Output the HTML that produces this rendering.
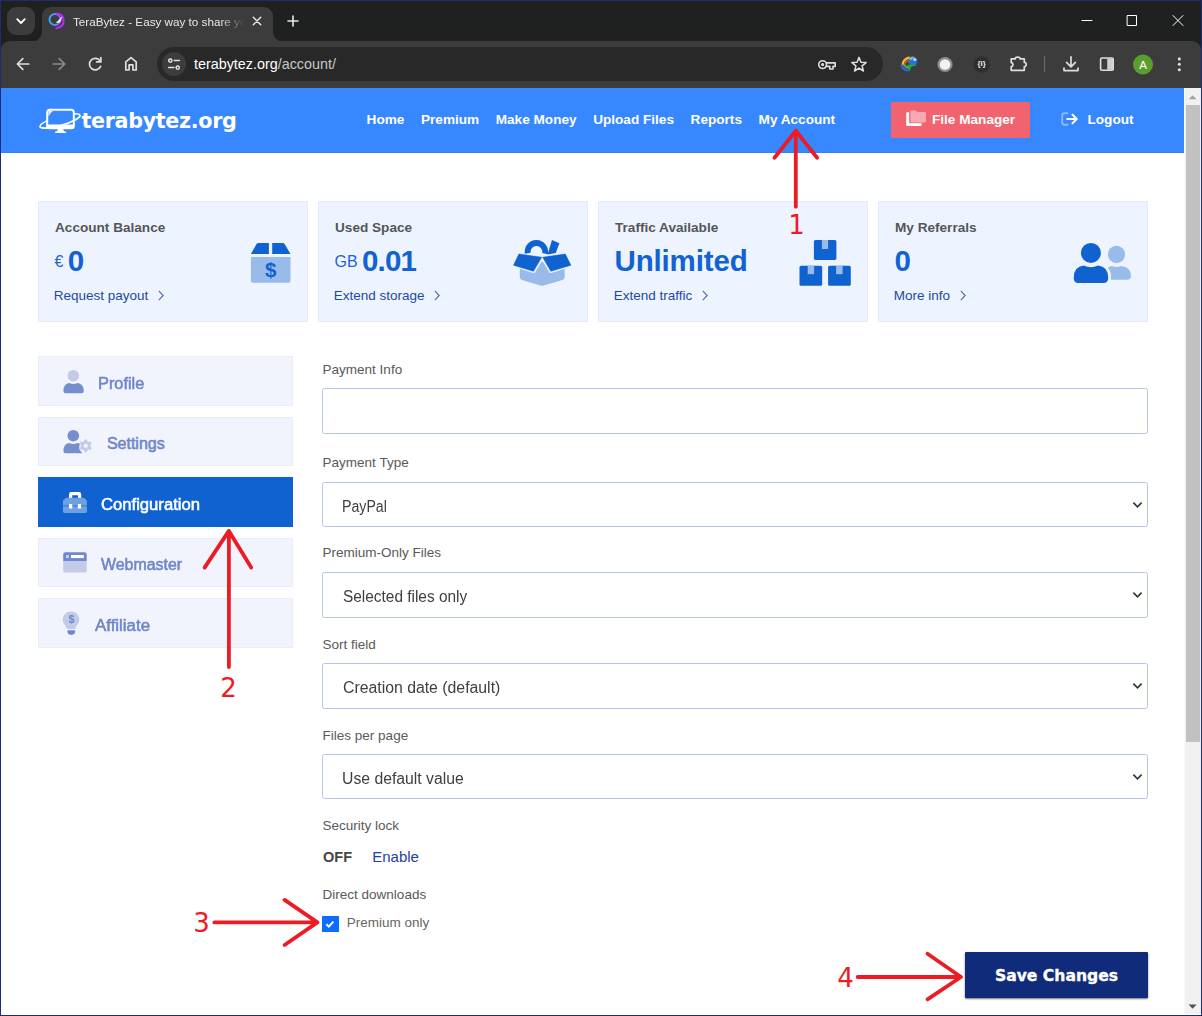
<!DOCTYPE html>
<html lang="en">
<head>
<meta charset="utf-8">
<title>TeraBytez - Easy way to share your files</title>
<style>
*{box-sizing:border-box;margin:0;padding:0}
html,body{width:1202px;height:1016px;overflow:hidden;background:#fff}
body{font-family:"Liberation Sans",sans-serif;position:relative;color:#555}
.abs{position:absolute}
#win{position:absolute;left:0;top:0;width:1202px;height:1016px;overflow:hidden;background:#fff}
#frame{position:absolute;left:0;top:0;width:1202px;height:1016px;border:1px solid #202c70;pointer-events:none;z-index:50}
/* ---------- browser chrome ---------- */
#tabstrip{position:absolute;left:0;top:0;width:1202px;height:60px;background:#1f2020}
#toolbar{position:absolute;left:1px;top:41px;width:1200px;height:47px;background:#3c3c3c;border-radius:9px 9px 0 0}
#tabsearch{position:absolute;left:7px;top:7px;width:28px;height:28px;border-radius:9px;background:#3c3c3c}
#tab{position:absolute;left:42px;top:7px;width:231px;height:35px;background:#3c3c3c;border-radius:9px 9px 0 0}
#tab:before,#tab:after{content:"";position:absolute;bottom:0;width:10px;height:10px;background:radial-gradient(circle at 0 0,transparent 9.5px,#3c3c3c 10px)}
#tab:before{left:-10px}
#tab:after{right:-10px;background:radial-gradient(circle at 100% 0,transparent 9.5px,#3c3c3c 10px)}
#tabtitle{position:absolute;left:31px;top:7px;width:170px;height:16px;font-size:11.7px;line-height:16px;color:#e8e8e8;white-space:nowrap;overflow:hidden;-webkit-mask-image:linear-gradient(90deg,#000 146px,transparent 172px);mask-image:linear-gradient(90deg,#000 146px,transparent 172px)}
#omni{position:absolute;left:157px;top:47px;width:726px;height:34px;border-radius:17px;background:#282828}
#siteinfo{position:absolute;left:5px;top:5px;width:24px;height:24px;border-radius:12px;background:#3c3c3c}
#url{position:absolute;left:37px;top:8px;font-size:14.35px;line-height:18px;color:#fff;white-space:nowrap}
#url span{color:#c7c7c7}
.ic{position:absolute;overflow:visible}
/* ---------- page ---------- */
#page{position:absolute;left:1px;top:88px;width:1183px;height:926px;background:#fff;overflow:hidden}
#hdr{position:absolute;left:0;top:0;width:1183px;height:65px;background:#3787ff;border-bottom:1px solid #3482f9}
#scroll{position:absolute;left:1184px;top:88px;width:17px;height:926px;background:#f1f1f1;border-left:1px solid #fafafa}
#thumb{position:absolute;left:1px;top:17px;width:14px;height:637px;background:#c1c1c1}

#logo{position:absolute;left:37px;top:16px;width:200px;height:32px}
#logotxt{position:absolute;left:80.4px;top:19.3px;font-family:"DejaVu Sans","Liberation Sans",sans-serif;font-weight:700;font-size:20.7px;line-height:28px;letter-spacing:-.33px;color:#fff;white-space:nowrap}
#nav{position:absolute;left:357.3px;top:0;height:64px;display:flex;align-items:center;font-weight:700;font-size:13.6px;color:#fff;white-space:nowrap}
#nav a{padding:0 8.3px;color:#fff;text-decoration:none;line-height:20px;display:block;margin-top:-1px}
#fm{position:absolute;left:890px;top:14px;width:139px;height:36px;background:#f1636e;color:#fff;font-weight:700;font-size:13.6px;line-height:36px;padding-left:41px;white-space:nowrap}
#logout{position:absolute;left:1086.5px;top:14px;height:36px;color:#fff;font-weight:700;font-size:13.6px;line-height:36px;white-space:nowrap}
.card{position:absolute;top:113px;width:269.5px;height:121px;background:#edf4ff;border:1px solid #e4ecfa}
.card h4{position:absolute;left:16px;top:17px;font-size:13.6px;line-height:18px;font-weight:700;color:#565656;white-space:nowrap}
.card .val{position:absolute;left:15.5px;top:41.5px;height:34px;line-height:34px;font-size:29.5px;letter-spacing:-.4px;font-weight:700;color:#1262d3;white-space:nowrap}
.card .val small{font-weight:400;font-size:16px;letter-spacing:0;color:#1f63cf;position:relative;top:-3.8px;margin-right:4.4px}
.card .lnk{position:absolute;left:14.7px;top:84px;font-size:13.5px;line-height:20px;color:#1d4aa0;white-space:nowrap}
.card svg.ci{position:absolute}
.chev{display:inline-block;width:6px;height:11px;margin-left:9.7px;vertical-align:-1px}

.sb{position:absolute;left:37px;width:254.8px;height:49.7px;background:#f1f4fd;border:1px solid #e9edf9;color:#6f86c9;font-weight:400;-webkit-text-stroke:.55px currentColor;font-size:16px;line-height:20px;white-space:nowrap}
.sb span{position:absolute;top:16.8px;display:inline-block;transform:scaleX(1);transform-origin:0 50%}
.sb.on{background:#0f62d0;border-color:#0f62d0;color:#fff}
.lbl{position:absolute;left:321.6px;font-size:13.5px;line-height:18px;color:#595959;white-space:nowrap}
.fld{position:absolute;left:321px;width:826px;height:46px;border:1px solid #b5c4e8;border-radius:2.5px;background:#fff;font-size:16px;color:#404040;white-space:nowrap}
.fld span{position:absolute;left:19.6px;top:14px;line-height:20px;display:inline-block;transform:scaleX(.915);transform-origin:0 50%}
.fld svg{position:absolute;right:4px;top:18px}

#save{position:absolute;left:964px;top:864px;width:183px;height:46px;background:#0f2b7a;color:#fff;font-family:"DejaVu Sans","Liberation Sans",sans-serif;font-weight:700;font-size:15.6px;line-height:48.6px;-webkit-text-stroke:.35px #fff;text-align:center;box-shadow:0 1px 2px rgba(0,0,0,.55);border-radius:1px;white-space:nowrap}
</style>
</head>
<body>
<div id="win">
  <div id="tabstrip">
    <div id="tabsearch"></div>
    <div id="tab"><div id="tabtitle">TeraBytez - Easy way to share your files</div></div>
  </div>
  <div id="toolbar"></div>
  <div id="omni"><div id="siteinfo"></div><div id="url">terabytez.org<span>/account/</span></div></div>

  <svg class="ic" id="chromeicons" style="left:0;top:0" width="1202" height="88" viewBox="0 0 1202 88" fill="none" stroke-linecap="round" stroke-linejoin="round">
    <defs>
      <linearGradient id="fav" x1="0" y1="0" x2="1" y2="1"><stop offset="0" stop-color="#29b6ff"/><stop offset=".5" stop-color="#5a6bff"/><stop offset="1" stop-color="#d23cf0"/></linearGradient>
    <linearGradient id="fav2" x1="0" y1="0" x2="1" y2="0"><stop offset="0" stop-color="#3aa6ff"/><stop offset=".55" stop-color="#5d8bff"/><stop offset="1" stop-color="#a24bf6"/></linearGradient></defs>
    <!-- tab search chevron -->
    <path d="M17.2 19.2 L21 23 L24.8 19.2" stroke="#fff" stroke-width="1.8"/>
    <!-- favicon -->
    <circle cx="55" cy="19.5" r="5.5" stroke="url(#fav2)" stroke-width="1.9"/>
    <path d="M57.2 13.6 Q63.6 14.6 63.6 20.6 Q63.4 27 56.4 28.2" stroke="#b32cf5" stroke-width="2.1"/>
    <path d="M56.6 22.4 L61.8 16.8 L60.4 21.6 Q58.6 23.6 56.6 22.4 Z" fill="#eef6ff" stroke="#cfe4ff" stroke-width=".6"/>
    <!-- tab close -->
    <path d="M253.3 17.3 L260.7 24.7 M260.7 17.3 L253.3 24.7" stroke="#e8e8e8" stroke-width="1.5"/>
    <!-- new tab -->
    <path d="M288 21 H298 M293 16 V26" stroke="#e8e8e8" stroke-width="1.6"/>
    <!-- window controls -->
    <path d="M1082 20.5 H1092" stroke="#fff" stroke-width="1"/>
    <rect x="1127.5" y="15.5" width="9" height="10" stroke="#fff" stroke-width="1"/>
    <path d="M1173 15.5 L1183 25.5 M1183 15.5 L1173 25.5" stroke="#fff" stroke-width="1"/>
    <!-- back -->
    <path d="M28.8 64 H17.6 M22.8 58.6 L17.4 64 L22.8 69.4" stroke="#dedede" stroke-width="1.7"/>
    <!-- forward -->
    <path d="M53.2 64 H64.4 M59.2 58.6 L64.6 64 L59.2 69.4" stroke="#8b8b8b" stroke-width="1.7"/>
    <!-- reload -->
    <path d="M100.3 61.2 A5.8 5.8 0 1 0 100.6 66.4" stroke="#dedede" stroke-width="1.7"/>
    <path d="M100.9 57.6 V61.9 H96.6" stroke="#dedede" stroke-width="1.7"/>
    <!-- home -->
    <path d="M125.8 70 V61.8 L131 57.6 L136.2 61.8 V70 H132.9 V64.8 H129.1 V70 Z" stroke="#dedede" stroke-width="1.7"/>
    <!-- site info (tune) -->
    <g stroke="#e3e3e3" stroke-width="1.5">
      <circle cx="170.3" cy="60.6" r="1.6"/><path d="M174.2 60.6 H179.4"/>
      <circle cx="177.7" cy="67.6" r="1.6"/><path d="M168.6 67.6 H173.8"/>
    </g>
    <!-- key -->
    <g stroke="#dedede" stroke-width="1.6">
      <circle cx="822.6" cy="64.6" r="3.9"/><circle cx="822.6" cy="64.6" r=".8" fill="#dedede"/>
      <path d="M826.6 62.9 H835.2 V66.4 H833 V69 H829.8 V66.4 H826.6"/>
    </g>
    <!-- star -->
    <path d="M859 57.4 L860.9 62.2 L866.1 62.6 L862.1 65.9 L863.4 71 L859 68.2 L854.6 71 L855.9 65.9 L851.9 62.6 L857.1 62.2 Z" stroke="#dedede" stroke-width="1.5"/>
    <!-- IDM-like globe -->
    <g stroke="none">
      <circle cx="912.7" cy="61" r="4.7" fill="#2b6fdb"/>
      <path d="M909.4 58.4 Q911.4 56.3 914 57 Q912.8 59.8 910 60.6 Z" fill="#86cf6c"/>
      <circle cx="914.7" cy="59.5" r="1.6" fill="#d4e8ff" opacity=".9"/>
    </g>
    <g fill="none" stroke-linecap="butt">
      <path d="M909.6 57.4 Q902.8 59.2 902.5 65.4" stroke="#f0c02c" stroke-width="2.2"/>
      <path d="M908.8 60 Q905 61.6 904.7 65.6" stroke="#df4a2e" stroke-width="1.6"/>
      <path d="M901.9 64.6 Q902.4 70.5 909.6 70.2" stroke="#2d62c6" stroke-width="2.6"/>
      <path d="M904 64.6 Q905.6 68 909.4 67.8" stroke="#59b84e" stroke-width="1.4"/>
    </g>
    <path d="M917.2 65 L911.2 66.8 L909.4 71.6 L908.8 67.6 L906.6 64.8 L911.4 64.8 Z" fill="#22b32a" stroke="none"/>
    <!-- record circle -->
    <circle cx="945" cy="64.5" r="7.6" fill="#8e8e8e" stroke="none"/>
    <circle cx="945" cy="64.5" r="5.3" fill="#f3f3f3" stroke="none"/>
    <!-- {i} -->
    <circle cx="981.6" cy="64.5" r="8.2" fill="#2f2f2f" stroke="none"/>
    <text x="981.6" y="66.2" text-anchor="middle" font-family="Liberation Sans, sans-serif" font-weight="700" font-size="7.6" fill="#f1f1f1" stroke="none">{i}</text>
    <!-- extensions puzzle -->
    <path d="M1011.2 58.9 H1015.2 C1015 56.4 1020.4 56.4 1020.2 58.9 H1024.3 V62.4 C1026.9 62.2 1026.9 66.8 1024.3 66.6 V70.3 H1011.2 V66.6 C1013.6 66.8 1013.6 62.4 1011.2 62.6 Z" stroke="#dedede" stroke-width="1.7"/>
    <!-- separator -->
    <path d="M1044.5 56.5 V71.5" stroke="#6a6a6a" stroke-width="1.2"/>
    <!-- download -->
    <path d="M1071 56.8 V66.2 M1066.6 62.4 L1071 66.8 L1075.4 62.4 M1064 68 V70.6 H1078 V68" stroke="#dedede" stroke-width="1.7"/>
    <!-- side panel -->
    <rect x="1100.6" y="58" width="12.6" height="12.2" rx="1.2" stroke="#dedede" stroke-width="1.6"/>
    <rect x="1107.2" y="58.4" width="5.8" height="11.4" fill="#cfcfcf" stroke="none"/>
    <!-- avatar -->
    <circle cx="1143" cy="64.5" r="10" fill="#5b9e30" stroke="none"/>
    <text x="1143" y="68.6" text-anchor="middle" font-family="Liberation Sans, sans-serif" font-size="11.5" fill="#fff" stroke="none">A</text>
    <!-- menu dots -->
    <g fill="#dedede" stroke="none"><circle cx="1179.3" cy="58.9" r="1.55"/><circle cx="1179.3" cy="64.3" r="1.55"/><circle cx="1179.3" cy="69.7" r="1.55"/></g>
  </svg>
  <div id="page">
    <div id="hdr">
      <svg id="logo" viewBox="0 0 200 32" fill="none">
        <ellipse cx="22" cy="16.9" rx="20.8" ry="4.6" transform="rotate(-16 22 16.9)" stroke="#fff" stroke-width="1.5"/>
        <rect x="9.2" y="5.7" width="26.6" height="18.6" rx="2.6" fill="#3787ff" stroke="#fff" stroke-width="2"/>
        <path d="M8.6 20.6 H36.4 V22.4 Q36.4 24.9 33.9 24.9 H11.1 Q8.6 24.9 8.6 22.4 Z" fill="#fff"/>
        <path d="M20.6 24.5 H24.6 L26.8 28.2 H18.2 Z" fill="#fff"/>
        <rect x="17" y="27.6" width="11.2" height="1.5" rx=".7" fill="#fff"/>
        <path d="M10.4 12.5 V7.6 Q10.4 6.8 11.2 6.8 H15.2 Q11.6 9.4 10.4 12.5 Z" fill="#e8f1ff"/>
        <path d="M42.8 16.9 A20.8 4.6 0 0 1 1.2 16.9" transform="rotate(-16 22 16.9)" stroke="#fff" stroke-width="1.6"/>
      </svg>
      <div id="logotxt">terabytez.org</div>
      <div id="nav"><a>Home</a><a>Premium</a><a>Make Money</a><a>Upload Files</a><a>Reports</a><a>My Account</a></div>
      <div id="fm">
        <svg class="ic" style="left:14px;top:8px" width="22" height="18" viewBox="0 0 22 18">
          <path d="M1.2 3.2 Q1.2 2.2 2.2 2.2 H4.2 V13.3 H16.6 V15 Q16.6 16 15.6 16 H2.2 Q1.2 16 1.2 15 Z" fill="#fff"/>
          <path d="M5.4 1.4 Q5.4 .4 6.4 .4 H10.6 L12.2 2 H20 Q21 2 21 3 V11.6 Q21 12.6 20 12.6 H6.4 Q5.4 12.6 5.4 11.6 Z" fill="#f9a9b0"/>
        </svg>File Manager</div>
      <svg class="ic" style="left:1060px;top:24px" width="18" height="14" viewBox="0 0 18 14" fill="none">
        <path d="M6.4 1.2 H3.4 Q1.2 1.2 1.2 3.4 V10.6 Q1.2 12.8 3.4 12.8 H6.4" stroke="#8db9ff" stroke-width="1.9" stroke-linecap="round"/>
        <path d="M6.2 7 H15.4 M11.4 2.6 L15.8 7 L11.4 11.4" stroke="#fff" stroke-width="2" stroke-linecap="round" stroke-linejoin="round"/>
      </svg>
      <div id="logout">Logout</div>
    </div>

    <div class="card" style="left:37px"><h4>Account Balance</h4><div class="val"><small>€</small>0</div><div class="lnk">Request payout<svg class="chev" viewBox="0 0 6 11" fill="none"><path d="M.8 .8 L5.2 5.5 L.8 10.2" stroke="#56689f" stroke-width="1.1"/></svg></div></div>
    <div class="card" style="left:317px"><h4>Used Space</h4><div class="val" style="letter-spacing:-.8px"><small>GB</small>0.01</div><div class="lnk">Extend storage<svg class="chev" viewBox="0 0 6 11" fill="none"><path d="M.8 .8 L5.2 5.5 L.8 10.2" stroke="#56689f" stroke-width="1.1"/></svg></div></div>
    <div class="card" style="left:597px"><h4>Traffic Available</h4><div class="val" style="letter-spacing:-.15px">Unlimited</div><div class="lnk">Extend traffic<svg class="chev" viewBox="0 0 6 11" fill="none"><path d="M.8 .8 L5.2 5.5 L.8 10.2" stroke="#56689f" stroke-width="1.1"/></svg></div></div>
    <div class="card" style="left:877px"><h4>My Referrals</h4><div class="val">0</div><div class="lnk">More info<svg class="chev" viewBox="0 0 6 11" fill="none"><path d="M.8 .8 L5.2 5.5 L.8 10.2" stroke="#56689f" stroke-width="1.1"/></svg></div></div>

    <div class="sb" style="top:268.3px"><span style="left:59px;transform:scaleX(1.02)">Profile</span></div>
    <div class="sb" style="top:328.7px"><span style="left:67.9px">Settings</span></div>
    <div class="sb on" style="top:389.1px"><span style="left:62.3px;transform:scaleX(1.04)">Configuration</span></div>
    <div class="sb" style="top:449.5px"><span style="left:62.4px;transform:scaleX(.995)">Webmaster</span></div>
    <div class="sb" style="top:509.9px"><span style="left:55.6px;transform:scaleX(1.055)">Affiliate</span></div>

    <div class="lbl" style="top:272.5px">Payment Info</div>
    <div class="fld" style="top:300px;height:46px"></div>
    <div class="lbl" style="top:366px">Payment Type</div>
    <div class="fld" style="top:394px;height:45px"><span style="transform:scaleX(.885);left:18.8px">PayPal</span><svg width="11" height="8" viewBox="0 0 11 8" fill="none"><path d="M1.4 1.6 L5.5 5.8 L9.6 1.6" stroke="#2f3337" stroke-width="1.6"/></svg></div>
    <div class="lbl" style="top:456.3px">Premium-Only Files</div>
    <div class="fld" style="top:484.4px;height:45.6px"><span style="transform:scaleX(.963)">Selected files only</span><svg width="11" height="8" viewBox="0 0 11 8" fill="none"><path d="M1.4 1.6 L5.5 5.8 L9.6 1.6" stroke="#2f3337" stroke-width="1.6"/></svg></div>
    <div class="lbl" style="top:547.5px">Sort field</div>
    <div class="fld" style="top:575px;height:45.7px"><span style="transform:scaleX(.988)">Creation date (default)</span><svg width="11" height="8" viewBox="0 0 11 8" fill="none"><path d="M1.4 1.6 L5.5 5.8 L9.6 1.6" stroke="#2f3337" stroke-width="1.6"/></svg></div>
    <div class="lbl" style="top:638.6px">Files per page</div>
    <div class="fld" style="top:665.6px;height:45.4px"><span style="transform:scaleX(.985);left:18.8px">Use default value</span><svg width="11" height="8" viewBox="0 0 11 8" fill="none"><path d="M1.4 1.6 L5.5 5.8 L9.6 1.6" stroke="#2f3337" stroke-width="1.6"/></svg></div>
    <div class="lbl" style="top:728.5px">Security lock</div>
    <div class="abs" style="left:322px;top:759.3px;font-size:14.5px;line-height:20px;font-weight:700;color:#454545;white-space:nowrap">OFF</div>
    <div class="abs" style="left:371.2px;top:759.3px;font-size:15px;line-height:20px;color:#243f9c;white-space:nowrap">Enable</div>
    <div class="lbl" style="top:797.9px">Direct downloads</div>
    <div class="abs" style="left:321.2px;top:827.8px;width:16.4px;height:16px;background:#0d6efd;border-radius:.5px"><svg class="ic" style="left:0;top:0" width="16" height="16" viewBox="0 0 16 16" fill="none"><path d="M4.4 8.3 L6.8 10.6 L11.4 5.6" stroke="#fff" stroke-width="2"/></svg></div>
    <div class="lbl" style="left:345.8px;top:825.8px;color:#666">Premium only</div>
    <div id="save">Save Changes</div>
    <svg id="art" class="ic" style="left:-1px;top:-88px" width="1184" height="1016" viewBox="0 0 1184 1016" fill="none">
      <!-- card 1: box with dollar -->
      <g>
        <path d="M250.9 254.1 L256.4 244.2 Q257.1 242.9 258.6 242.9 H268.9 V254.1 Z" fill="#0f62d0"/>
        <path d="M272.2 242.9 H282.6 Q284.1 242.9 284.8 244.2 L290.5 254.1 H272.2 Z" fill="#0f62d0"/>
        <path d="M250.9 257.1 H290.5 V280.2 Q290.5 282.8 287.9 282.8 H253.5 Q250.9 282.8 250.9 280.2 Z" fill="#98bbe9"/>
        <text x="270.7" y="277" text-anchor="middle" font-family="Liberation Sans, sans-serif" font-weight="700" font-size="20.5" fill="#0f62d0">$</text>
      </g>
      <!-- card 2: open box -->
      <g>
        <path d="M527.7 253.2 A8.8 8.8 0 1 1 545 253.6" stroke="#0f62d0" stroke-width="5.8"/>
        <path d="M552 240 L559.4 243.2 L555.8 253 L547.6 254.6 Z" fill="#0f62d0"/>
        <path d="M519.8 268.8 L533 273 Q534.4 273.4 535.2 272.2 L541 262.6 Q542.2 261 543.4 262.6 L549.2 272.2 Q550 273.4 551.4 273 L564.7 268.8 V277 Q564.7 279.2 562.5 279.9 L543.8 285.5 Q542.2 286 540.6 285.5 L522 279.9 Q519.8 279.2 519.8 277 Z" fill="#98bbe9"/>
        <path d="M518.9 254.1 L541.7 257.3 L533.4 271.2 L513.6 265.2 Z" fill="#0f62d0" stroke="#0f62d0" stroke-width=".6" stroke-linejoin="round"/>
        <path d="M542.7 257.3 L565.3 254.1 L570.9 265.2 L550.8 271.2 Z" fill="#0f62d0" stroke="#0f62d0" stroke-width=".6" stroke-linejoin="round"/>
      </g>
      <!-- card 3: boxes -->
      <g>
        <rect x="813.9" y="240" width="22.5" height="19.9" rx="1.6" fill="#0f62d0"/><rect x="821.9" y="240" width="6.2" height="9" fill="#98bbe9"/>
        <rect x="799.5" y="265.7" width="22.7" height="20.1" rx="1.6" fill="#0f62d0"/><rect x="807.7" y="265.7" width="6.4" height="8.5" fill="#98bbe9"/>
        <rect x="828.1" y="265.7" width="22.7" height="20.1" rx="1.6" fill="#0f62d0"/><rect x="836.1" y="265.7" width="6.5" height="8.5" fill="#98bbe9"/>
      </g>
      <!-- card 4: users -->
      <g>
        <circle cx="1116.5" cy="254.4" r="8.6" fill="#98bbe9"/>
        <path d="M1107.8 267.4 Q1110.6 265.9 1112 265.9 Q1116.5 268 1121 265.9 Q1131 266.6 1131 276 Q1131 279.8 1127 279.8 H1111 V276 Q1111 271 1107.8 267.4 Z" fill="#98bbe9"/>
        <circle cx="1090.9" cy="252.9" r="10" fill="#0f62d0"/>
        <path d="M1073.7 278 Q1073.7 266.6 1083.8 265.6 Q1090.9 269 1098 265.6 Q1108.2 266.6 1108.2 278 Q1108.2 283 1103.4 283 H1078.5 Q1073.7 283 1073.7 278 Z" fill="#0f62d0"/>
      </g>
      <!-- sidebar icons -->
      <g>
        <circle cx="73.3" cy="375.7" r="5.8" fill="#c4cbe8"/>
        <path d="M63.4 391 Q63.4 384 69.2 383.1 Q73.3 385 77.4 383.1 Q83.8 384 83.8 391 Q83.8 393.2 81.6 393.2 H65.6 Q63.4 393.2 63.4 391 Z" fill="#768fcc"/>
        <circle cx="73.3" cy="435.7" r="5.8" fill="#768fcc"/>
        <path d="M63.4 451 Q63.4 444 69.2 443.1 Q73.3 445 77.4 443.1 Q79 443.3 80 444 Q77.4 448.6 82.4 453.2 H65.6 Q63.4 453.2 63.4 451 Z" fill="#768fcc"/>
        <path d="M84.5 439.6 h2.4 l.5 1.7 l1.4 .8 l1.7 -.5 l1.2 2.1 l-1.2 1.2 v1.8 l1.2 1.2 l-1.2 2.1 l-1.7 -.5 l-1.4 .8 l-.5 1.7 h-2.4 l-.5 -1.7 l-1.4 -.8 l-1.7 .5 l-1.2 -2.1 l1.2 -1.2 v-1.8 l-1.2 -1.2 l1.2 -2.1 l1.7 .5 l1.4 -.8 Z M85.7 443.8 a2.1 2.1 0 1 0 .01 0 Z" fill="#c4cbe8" fill-rule="evenodd"/>
        <path d="M69 498.4 V494.2 Q69 492 71.2 492 H79 Q81.2 492 81.2 494.2 V498.4 H78 V495.2 H72.2 V498.4 Z" fill="#fff"/>
        <path d="M62.9 501.4 Q62.9 500.6 63.5 500 L65.4 498.3 Q66 497.8 66.8 497.8 H83 Q83.8 497.8 84.4 498.3 L86.3 500 Q86.9 500.6 86.9 501.4 V511.3 Q86.9 512.9 85.3 512.9 H64.5 Q62.9 512.9 62.9 511.3 Z" fill="#6fa0e2"/>
        <rect x="62.9" y="505.4" width="24" height="1" fill="#2f73d4"/>
        <rect x="69" y="504.1" width="3.3" height="4.4" rx=".6" fill="#fff"/><rect x="77.8" y="504.1" width="3.3" height="4.4" rx=".6" fill="#fff"/>
        <path d="M63.2 561 H86.7 V570.4 Q86.7 572.6 84.5 572.6 H65.4 Q63.2 572.6 63.2 570.4 Z" fill="#c4cbe8"/>
        <path d="M63.2 554.4 Q63.2 552.2 65.4 552.2 H84.5 Q86.7 552.2 86.7 554.4 V561 H63.2 Z" fill="#6f88cb"/>
        <rect x="66" y="555" width="3" height="3.1" fill="#c4cbe8"/><rect x="71" y="555" width="12.8" height="3.1" fill="#fff"/>
        <path d="M71 611.4 A8.15 8.15 0 0 1 77.6 624.4 Q75.6 626.8 75.2 628.9 H66.8 Q66.4 626.8 64.4 624.4 A8.15 8.15 0 0 1 71 611.4 Z" fill="#c4cbe8"/>
        <path d="M67.5 630.2 H75.1 V631.6 Q75.1 634.9 71.3 634.9 Q67.5 634.9 67.5 631.6 Z" fill="#6f88cb"/>
        <text x="71.3" y="623.4" text-anchor="middle" font-family="Liberation Sans, sans-serif" font-weight="700" font-size="10.5" fill="#6f88cb">$</text>
      </g>
      <!-- red annotations -->
      <g stroke="#ed1c24" stroke-width="3.8" stroke-linecap="round" stroke-linejoin="round">
        <path d="M795.8 206.7 V130.8 M774.5 157.7 L795.8 130.8 L817.1 157.7"/>
        <path d="M228.9 667 V530.9 M204.6 567.6 L228.9 530.9 L251.2 567.6"/>
        <path d="M214.4 922.4 H317.4 M284.6 899.9 L317.4 922.4 L284.6 945"/>
        <path d="M857.7 977 H961 M927.5 953.8 L961 977 L927.5 999.3"/>
      </g>
      <g font-family="DejaVu Sans, Liberation Sans, sans-serif" font-size="26" fill="#ed1c24" text-anchor="middle">
        <text x="796.6" y="234.3">1</text>
        <text x="228.6" y="696.6">2</text>
        <text x="201.6" y="932.3">3</text>
        <text x="845.6" y="986.6">4</text>
      </g>
    </svg>
  </div>
  <div id="scroll"><div id="thumb"></div><svg class="ic" style="left:-1px;top:0" width="17" height="926" viewBox="1184 88 17 926"><path d="M1188.6 99.2 L1192.6 95.2 L1196.6 99.2 Z" fill="#a3a3a3"/><path d="M1188.6 1004.6 L1192.6 1008.8 L1196.6 1004.6 Z" fill="#505050"/></svg></div>
  <div id="frame"></div>
</div>
</body>
</html>
